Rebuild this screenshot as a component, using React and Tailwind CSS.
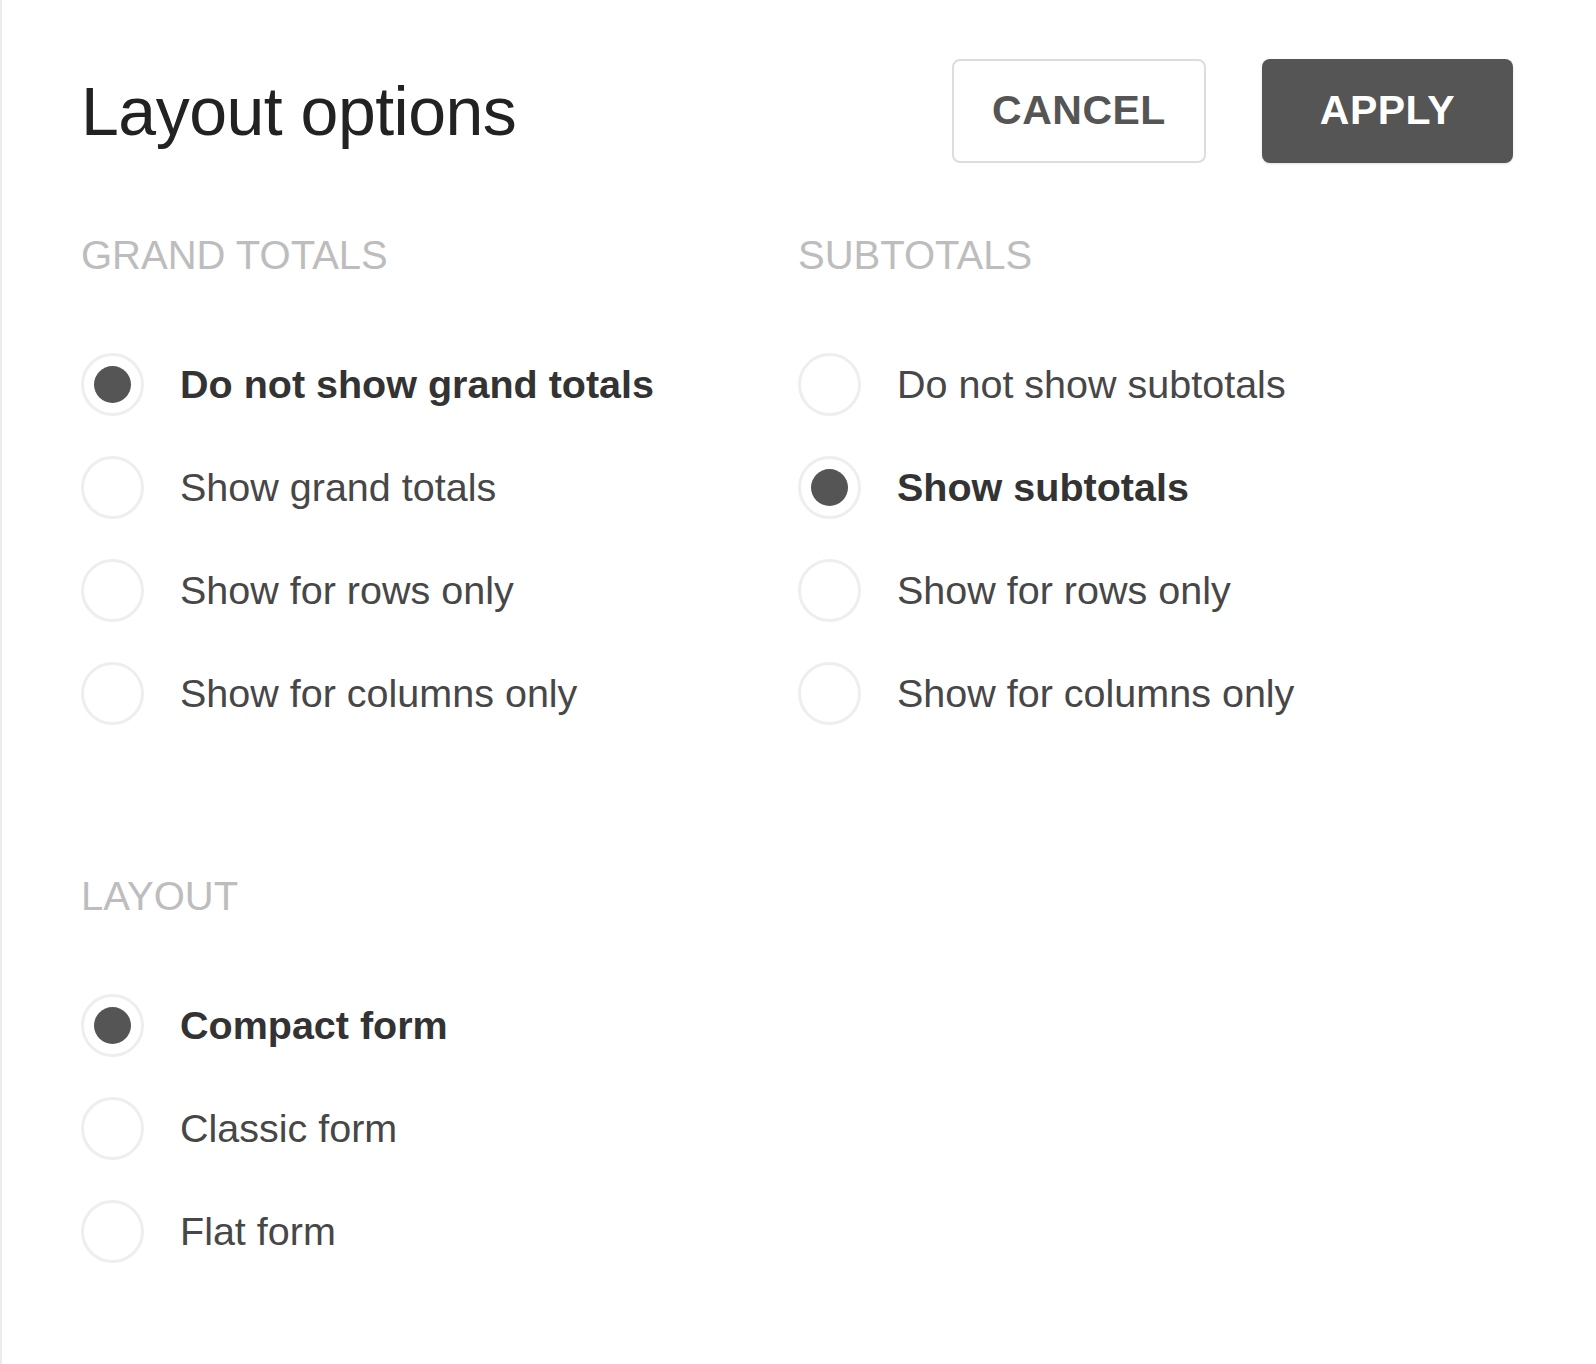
import { useState } from 'react';

const grandTotals = [
    { id: 'none', label: 'Do not show grand totals' },
    { id: 'show', label: 'Show grand totals' },
    { id: 'rows', label: 'Show for rows only' },
    { id: 'cols', label: 'Show for columns only' },
];

const subtotals = [
    { id: 'none', label: 'Do not show subtotals' },
    { id: 'show', label: 'Show subtotals' },
    { id: 'rows', label: 'Show for rows only' },
    { id: 'cols', label: 'Show for columns only' },
];

const layouts = [
    { id: 'compact', label: 'Compact form' },
    { id: 'classic', label: 'Classic form' },
    { id: 'flat', label: 'Flat form' },
];

const RadioGroup = ({ title, options, value, onChange }) => (
    <div>
        <div className="text-[40px] leading-none text-[#bdbdbd] mb-[58px]">{title}</div>
        <div className="flex flex-col">
            {options.map(opt => {
                const checked = opt.id === value;
                return (
                    <label key={opt.id} onClick={() => onChange(opt.id)} className="h-[103px] flex items-center gap-[36px] cursor-pointer">
                        <span className="w-[63px] h-[63px] rounded-full border-[3px] border-[#eeeeee] flex items-center justify-center shrink-0">
                            {checked && <span className="w-[37px] h-[37px] rounded-full bg-[#555555]" />}
                        </span>
                        <span className={`text-[39.5px] leading-none ${checked ? 'font-bold text-[#333333]' : 'text-[#474747]'}`}>
                            {opt.label}
                        </span>
                    </label>
                );
            })}
        </div>
    </div>
);

const App = () => {
    const [grand, setGrand] = useState('none');
    const [sub, setSub] = useState('show');
    const [layout, setLayout] = useState('compact');

    return (
        <div className="w-full h-[1364px] bg-white border-l-2 border-[#ececec] pl-[79px] pr-[83px] pt-[59px]" style={{ fontFamily: '"Liberation Sans", Arial, sans-serif' }}>
            {/* header */}
            <div className="flex items-center justify-between h-[104px]">
                <h1 className="text-[68px] leading-none text-[#222222] tracking-[-0.5px]">Layout options</h1>
                <div className="flex items-center gap-[56px]">
                    <button className="w-[254px] h-[104px] border-2 border-[#dddddd] rounded-[8px] text-[41px] font-bold text-[#555555] tracking-[0.5px]">
                        CANCEL
                    </button>
                    <button className="w-[251px] h-[104px] bg-[#555555] rounded-[8px] text-[41px] font-bold text-white tracking-[0.5px] shadow-sm">
                        APPLY
                    </button>
                </div>
            </div>

            {/* totals */}
            <div className="grid grid-cols-[717px_1fr] mt-[72px]">
                <RadioGroup title="GRAND TOTALS" options={grandTotals} value={grand} onChange={setGrand} />
                <RadioGroup title="SUBTOTALS" options={subtotals} value={sub} onChange={setSub} />
            </div>

            {/* layout */}
            <div className="mt-[131px]">
                <RadioGroup title="LAYOUT" options={layouts} value={layout} onChange={setLayout} />
            </div>
        </div>
    );
};

export default App;
